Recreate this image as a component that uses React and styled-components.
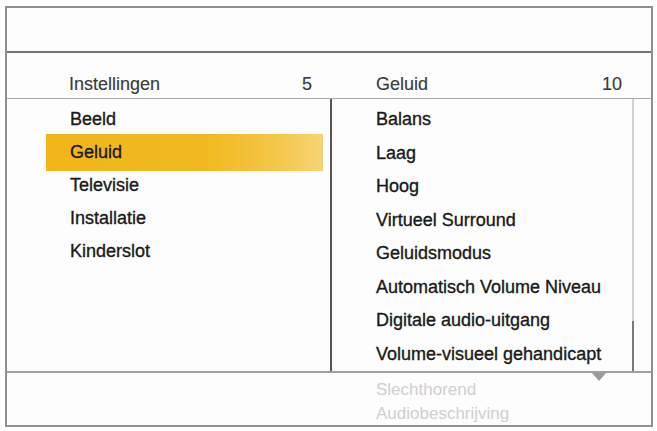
import React from 'react';
import styled, { createGlobalStyle } from 'styled-components';

const menu = ['Beeld', 'Geluid', 'Televisie', 'Installatie', 'Kinderslot'];
const options = [
  'Balans',
  'Laag',
  'Hoog',
  'Virtueel Surround',
  'Geluidsmodus',
  'Automatisch Volume Niveau',
  'Digitale audio-uitgang',
  'Volume-visueel gehandicapt',
];
const overflow = ['Slechthorend', 'Audiobeschrijving'];

const App = () => {
  return (
    <>
      <GlobalStyle />
      <Frame>
        <TopBar />
        <HeaderRow>
          <HeaderCell $left="62px" $right="20px">
            <span>Instellingen</span>
            <span>5</span>
          </HeaderCell>
          <HeaderCell $left="44px" $right="29px">
            <span>Geluid</span>
            <span>10</span>
          </HeaderCell>
        </HeaderRow>
        <Body>
          <LeftList>
            {menu.map((item) => (
              <MenuItem key={item} $active={item === 'Geluid'}>
                {item}
              </MenuItem>
            ))}
          </LeftList>
          <RightPane>
            <RightList>
              {options.map((item) => (
                <OptionItem key={item}>{item}</OptionItem>
              ))}
            </RightList>
            <ScrollTrack>
              <ScrollThumb />
            </ScrollTrack>
          </RightPane>
        </Body>
        <Footer>
          <MoreArrow />
          <FadedList>
            {overflow.map((item) => (
              <FadedItem key={item}>{item}</FadedItem>
            ))}
          </FadedList>
        </Footer>
      </Frame>
    </>
  );
};

const GlobalStyle = createGlobalStyle`
  html, body {
    margin: 0;
    padding: 0;
    background: #ffffff;
  }
  body {
    font-family: "Liberation Sans", Arial, sans-serif;
  }
`;

const Frame = styled.div`
  box-sizing: border-box;
  margin: 6px 0 0 5px;
  width: 648px;
  height: 421px;
  border: 2px solid #8f8f8f;
  background: #fdfdfd;
  display: flex;
  flex-direction: column;
  color: #1a1a1a;
  font-size: 18px;
  -webkit-text-stroke: 0.35px currentColor;
`;

const TopBar = styled.div`
  height: 43px;
  border-bottom: 2px solid #747474;
  flex-shrink: 0;
`;

const HeaderRow = styled.div`
  display: grid;
  grid-template-columns: 325px 1fr;
  height: 45px;
  border-bottom: 1px solid #a8a8a8;
  flex-shrink: 0;
  color: #3a3a3a;
  -webkit-text-stroke: 0.15px currentColor;
`;

const HeaderCell = styled.div`
  display: flex;
  align-items: flex-end;
  justify-content: space-between;
  padding: 0 ${(p) => p.$right} 3px ${(p) => p.$left};
`;

const Body = styled.div`
  display: grid;
  grid-template-columns: 325px 1fr;
  height: 272px;
  flex-shrink: 0;
  border-bottom: 2px solid #a0a0a0;
`;

const LeftList = styled.div`
  border-right: 2px solid #555;
  padding-top: 4px;
  padding-right: 7px;
  display: flex;
  flex-direction: column;
`;

const MenuItem = styled.div`
  height: 33px;
  display: flex;
  align-items: center;
  margin-left: 39px;
  padding-left: 24px;
  ${(p) =>
    p.$active &&
    `
    height: 37px;
    margin: -2px 0;
    margin-left: 39px;
    background: linear-gradient(90deg, #f0b61a 0%, #f1ba22 60%, #f4c84e 85%, #f6d477 100%);
  `}
`;

const RightPane = styled.div`
  display: flex;
`;

const RightList = styled.div`
  flex: 1;
  padding: 4px 0 0 44px;
  display: flex;
  flex-direction: column;
`;

const OptionItem = styled.div`
  height: 33.5px;
  display: flex;
  align-items: center;
  white-space: nowrap;
`;

const ScrollTrack = styled.div`
  width: 2px;
  margin-right: 17px;
  background: #d2d2d2;
  display: flex;
  flex-direction: column;
  justify-content: flex-end;
`;

const ScrollThumb = styled.div`
  height: 50px;
  background: #7a7a7a;
`;

const Footer = styled.div`
  position: relative;
  flex: 1;
  padding-left: 369px;
`;

const MoreArrow = styled.div`
  position: absolute;
  top: 0;
  left: 585px;
  width: 0;
  height: 0;
  border-left: 7px solid transparent;
  border-right: 7px solid transparent;
  border-top: 8px solid #9a9a9a;
`;

const FadedList = styled.div`
  padding-top: 5px;
  display: flex;
  flex-direction: column;
`;

const FadedItem = styled.div`
  height: 24px;
  display: flex;
  align-items: center;
  color: #cfcfcf;
  font-size: 17px;
  -webkit-text-stroke: 0;
`;

export default App;
